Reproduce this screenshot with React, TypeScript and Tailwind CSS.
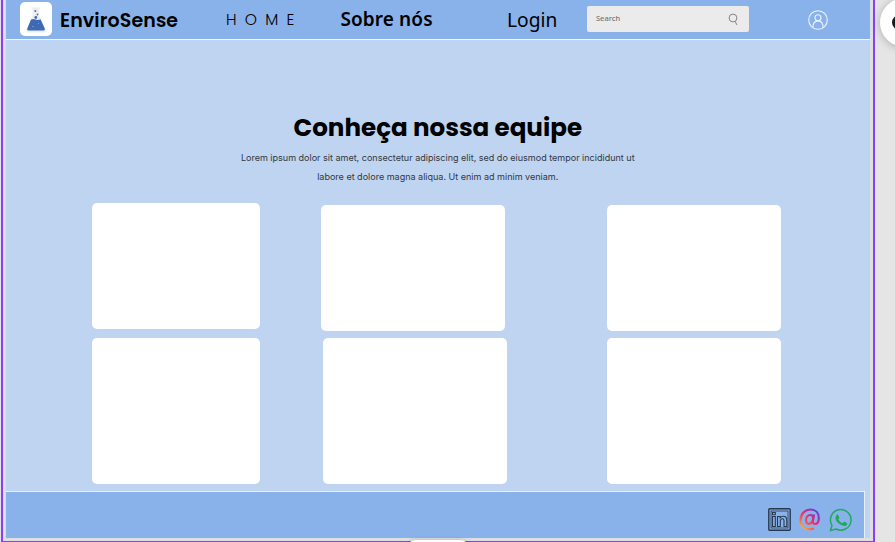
import React from "react";

const display = "font-['Poppins','Inter',sans-serif]";

function FlaskLogo() {
  return (
    <div className="h-[34px] w-8 rounded-[5px] bg-white">
      <svg viewBox="0 0 32 34" className="h-full w-full">
        <path d="M11 5.500h9.500v1.300h-1.200v7L25.500 27q1 3-1.500 3.500H8Q5.500 30 6.500 27L12.500 14V6.800H11z" fill="#eceeef" />
        <path d="M11 17.500Q13.500 16.300 15.500 17.500Q18 18.500 20.500 17.300L24.500 26Q25.500 28.300 23.500 28.500H8.500Q6.500 28.300 7.500 26z" fill="#3d69b5" />
        <circle cx="15.300" cy="9" r="1" fill="#4b70b4" />
        <circle cx="17.500" cy="12.500" r=".9" fill="#4b70b4" />
        <circle cx="15.800" cy="15.500" r="1.400" fill="#3d69b5" />
        <path d="M12 24.500h1.500M18 21.500h1" stroke="#7597ce" />
      </svg>
    </div>
  );
}

function Header() {
  return (
    <header className="flex h-10 shrink-0 border-b border-[#f3f7fc] bg-[#89b2ea] text-black">
      <div className="ml-[14px] mt-[2px] w-10 shrink-0">
        <FlaskLogo />
      </div>
      <div className={`${display} w-[166px] shrink-0 whitespace-nowrap pt-px text-[19px] font-semibold leading-[39px] tracking-[0.1px]`}>
        EnviroSense
      </div>
      <nav className="flex w-[361px] shrink-0 whitespace-nowrap leading-[39px]">
        <a className="w-[114px] font-['Poppins','Inter',sans-serif] text-[15.5px] font-light tracking-[8.2px]">HOME</a>
        <a className="w-[167px] pl-[0.5px] font-['Noto_Sans',sans-serif] text-[19px] font-semibold tracking-[0.1px]">Sobre nós</a>
        <a className="font-['Noto_Sans',sans-serif] text-[19.2px] font-normal">Login</a>
      </nav>
      <div className="mt-[6px] flex h-[26px] w-[162px] shrink-0 items-center justify-between rounded-[2px] bg-[#ebebeb] pl-[9px] pr-[10px]">
        <span className="font-['Noto_Sans',sans-serif] text-[7.5px] font-medium text-[#777]">Search</span>
        <svg viewBox="0 0 12 13" className="h-[13px] w-3" fill="none" stroke="#858585" strokeWidth="1">
          <circle cx="6" cy="5" r="3.900" />
          <path d="M8 8.300l2 3.700" />
        </svg>
      </div>
      <svg viewBox="0 0 20 20" className="ml-[59px] mt-[10px] h-5 w-5 shrink-0" fill="none" stroke="#edf4fd" strokeWidth="1.100">
        <circle cx="10" cy="10" r="9.300" />
        <circle cx="10" cy="7.800" r="3" />
        <path d="M4.800 17.500C5 13 7 10.900 10 10.900s5 2.100 5.200 6.600" />
      </svg>
    </header>
  );
}

function Team() {
  return (
    <main className="flex h-[451px] shrink-0 flex-col">
      <h1 className={`${display} mt-[68px] h-[38px] whitespace-nowrap text-center text-[24.6px] font-bold leading-10 text-black`}>
        Conheça nossa equipe
      </h1>
      <p className="mt-[2px] whitespace-nowrap text-center font-['Inter',sans-serif] text-[9.03px] leading-[19px] text-[#303843]">
        Lorem ipsum dolor sit amet, consectetur adipiscing elit, sed do eiusmod tempor incididunt ut
        <br />
        labore et dolore magna aliqua. Ut enim ad minim veniam.
      </p>
      <section className="ml-[86.4px] mt-[17px] flex items-start">
        <div className="flex w-[228.6px] flex-col gap-[9px]">
          <div className="h-[126px] w-[167.500px] rounded-[5px] bg-white" />
          <div className="h-[146px] w-[167.500px] rounded-[5px] bg-white" />
        </div>
        <div className="flex w-[286.4px] flex-col gap-[7px] pt-[2px]">
          <div className="h-[126px] w-[184px] rounded-[5px] bg-white" />
          <div className="ml-[2px] h-[146px] w-[184px] rounded-[5px] bg-white" />
        </div>
        <div className="flex flex-col gap-[7px] pt-[2px]">
          <div className="h-[126px] w-[173.500px] rounded-[5px] bg-white" />
          <div className="h-[146px] w-[173.500px] rounded-[5px] bg-white" />
        </div>
      </section>
    </main>
  );
}

function Footer() {
  return (
    <footer className="flex h-[47px] w-[859px] shrink-0 border-r border-t border-[#e7f0fb] bg-[#89b2ea] pl-[762px] pt-4">
      <svg viewBox="0 0 23 23" className="h-[23px] w-[23px] shrink-0" fill="none" stroke="#26384f">
        <rect x=".8" y=".8" width="21.400" height="21.400" rx="1" strokeWidth="1.400" />
        <rect x="3" y="3" width="17" height="17" strokeWidth=".8" />
        <path d="M4.500 8.500h2.800v10H4.500zM4.500 4.500h2.800v2.300H4.500zM9.500 8.500h2.700v1.200Q13.500 8.100 15.500 8.200Q18.800 8.400 18.800 12v6.500H16v-6Q16 10.700 14.500 10.700T12.300 12.500v6H9.500z" strokeWidth="1.100" />
      </svg>
      <svg viewBox="0 0 22 23" className="ml-[8px] h-[23px] w-[22px] shrink-0" fill="none">
        <defs>
          <linearGradient id="at" x1="2" y1="21" x2="18" y2="3" gradientUnits="userSpaceOnUse">
            <stop stopColor="#ffc443" />
            <stop offset=".3" stopColor="#ff5d42" />
            <stop offset=".6" stopColor="#e12b79" />
            <stop offset="1" stopColor="#6240d8" />
          </linearGradient>
        </defs>
        <path d="M14.800 20.500C8 23.300 1.500 19.500 1.500 12.500C1.500 6 6 1.500 11.500 1.500c5 0 8.300 3.300 8.300 8.500c0 3.500-1.500 6-3.700 6c-2 0-2.500-1.500-2.100-3.500l1.100-6M14.200 10c0-2-1-3-2.700-3c-2.800 0-4.500 2.500-4.500 5.300c0 2.200 1 3.500 2.700 3.500c2.500 0 4.200-2.500 4.500-5.800" stroke="url(#at)" strokeWidth="2.200" />
      </svg>
      <svg viewBox="0 0 24 24" className="ml-[8px] h-6 w-6 shrink-0">
        <path d="M1.500 22.500L3 17.300A10.300 10.300 0 1 1 7 21z" fill="none" stroke="#22a95d" strokeWidth="1.500" />
        <path d="M8.800 6.300L10.500 9.800L9.400 11.400Q11 14.200 13.500 15.200L15 13.600L18.300 15.200Q18 18 15.500 18Q12 18 8.900 14.800T6.600 9Q6.700 6.800 8.800 6.300" fill="#22a95d" />
      </svg>
    </footer>
  );
}

export default function App() {
  return (
    <div className="relative flex h-[542px] w-[895px] overflow-hidden bg-[#e5e5e5]">
      <div className="ml-px h-[542px] w-[874px] shrink-0 border-x-2 border-b border-[#8b3dff] bg-[#dedfe1] pl-[3px]">
        <div className="flex h-[538px] w-[863.5px] flex-col bg-[#bfd4f1]">
          <Header />
          <Team />
          <Footer />
        </div>
      </div>
      <div className="absolute left-[880px] top-[-2px] flex h-[49px] w-[49px] items-center rounded-full bg-white pl-[12px] shadow-[0_1px_8px_rgba(0,0,0,0.25)]">
        <div className="h-[15px] w-[15px] rounded-full border-[3px] border-[#16191e]" />
      </div>
      <div className="absolute left-[406px] top-[540px] h-5 w-[64px] rounded-[10px] bg-white shadow-[0_0_4px_rgba(0,0,0,0.2)]" />
    </div>
  );
}
